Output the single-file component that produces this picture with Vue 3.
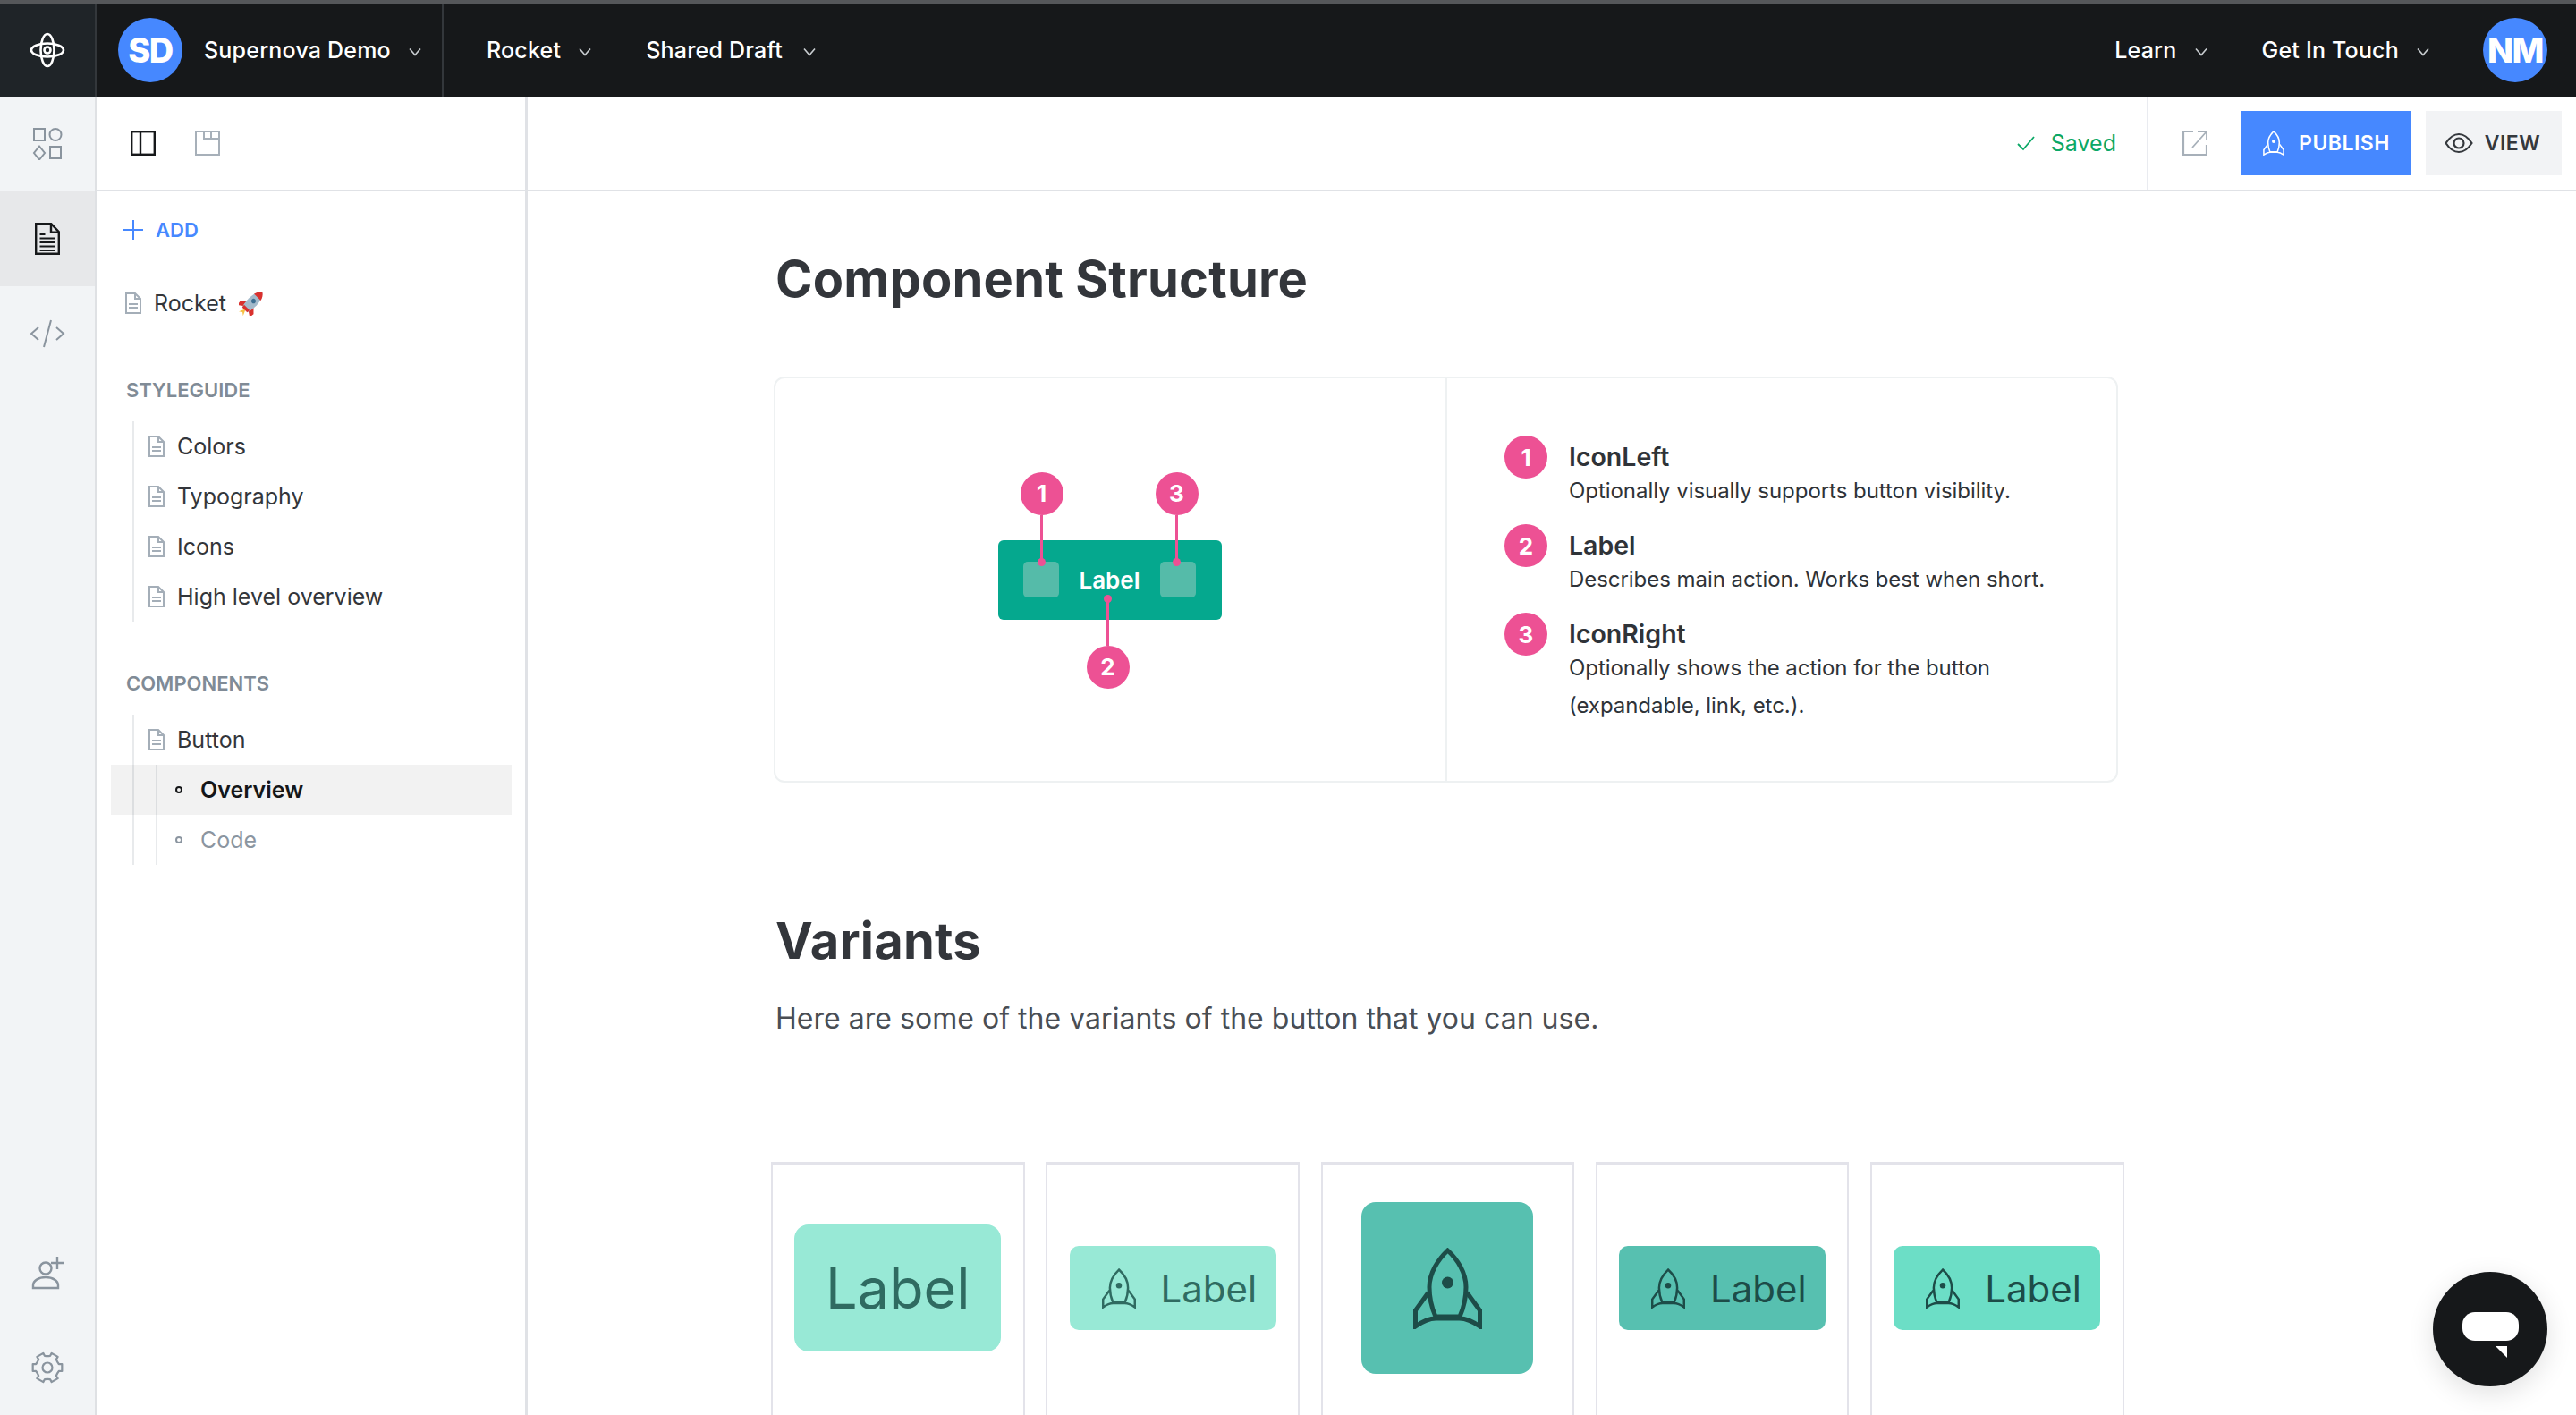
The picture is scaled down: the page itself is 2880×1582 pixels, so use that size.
<script setup>
const styleguide = ['Colors', 'Typography', 'Icons', 'High level overview']
const variants = [
  { id: 1, cls: 'v-text', icon: false, label: true },
  { id: 2, cls: 'v-light', icon: true, label: true },
  { id: 3, cls: 'v-icon', icon: true, label: false },
  { id: 4, cls: 'v-dark', icon: true, label: true },
  { id: 5, cls: 'v-mint', icon: true, label: true },
]
const legend = [
  { n: 1, title: 'IconLeft', lines: ['Optionally visually supports button visibility.'] },
  { n: 2, title: 'Label', lines: ['Describes main action. Works best when short.'] },
  { n: 3, title: 'IconRight', lines: ['Optionally shows the action for the button', '(expandable, link, etc.).'] },
]
function gearPath() {
  const pts = []
  const cx = 18, cy = 18, teeth = 6
  for (let i = 0; i < teeth; i++) {
    const a = (i * Math.PI * 2) / teeth
    const w = 0.24, v = 0.3
    const p = (r, t) => `${(cx + r * Math.cos(a + t)).toFixed(2)} ${(cy + r * Math.sin(a + t)).toFixed(2)}`
    pts.push(`${i ? 'L' : 'M'}${p(13.4, -v)}L${p(16.8, -w)}L${p(16.8, w)}L${p(13.4, v)}`)
    const mid = a + Math.PI / teeth
    pts.push(`Q${(cx + 12.6 * Math.cos(mid)).toFixed(2)} ${(cy + 12.6 * Math.sin(mid)).toFixed(2)} `)
    const nxt = a + (Math.PI * 2) / teeth - v
    pts.push(`${(cx + 13.4 * Math.cos(nxt)).toFixed(2)} ${(cy + 13.4 * Math.sin(nxt)).toFixed(2)}`)
  }
  return pts.join('') + 'Z'
}
const gear = gearPath()
</script>

<template>
  <div class="app">
    <svg class="defs" aria-hidden="true">
      <defs>
        <symbol id="rocket" viewBox="0 0 77 91">
          <path fill="none" stroke="currentColor" stroke-width="5" d="M38.500 3C28 13 18 28 18 44c0 12 3 24 7 33h27c4-9 7-21 7-33 0-16-9.500-31-20.500-41Z" />
          <path fill="none" stroke="currentColor" stroke-width="5" d="M17 50 2.500 70v18c7-5 15-9 23-9h26c8 0 16 4 23 9V70L60 50" />
          <circle cx="38.500" cy="39" r="6.500" fill="currentColor" />
        </symbol>
        <symbol id="doc" viewBox="0 0 18 24">
          <path fill="none" stroke="currentColor" stroke-width="2" d="M1 1h10l6 6v16H1Z" />
          <path fill="none" stroke="currentColor" stroke-width="2" d="M11 1v6h6M4 13h10M4 17h10" />
        </symbol>
        <symbol id="chev" viewBox="0 0 14 10">
          <path fill="none" stroke="currentColor" stroke-width="1.600" d="M1 1.500 7 8.500 13 1.500" />
        </symbol>
      </defs>
    </svg>

    <header class="topbar">
      <div class="logo-cell">
        <svg width="40" height="40" viewBox="0 0 40 40" fill="none" stroke="#fff" stroke-width="2.600">
          <ellipse cx="20" cy="20" rx="7.500" ry="18" />
          <ellipse cx="20" cy="20" rx="18" ry="7.500" />
          <circle cx="20" cy="20" r="3.500" />
        </svg>
      </div>
      <div class="brand">
        <span class="avatar">SD</span>
        <span class="top-text">Supernova Demo</span>
        <svg class="chev"><use href="#chev" /></svg>
      </div>
      <nav class="top-nav">
        <span class="top-text">Rocket</span>
        <svg class="chev"><use href="#chev" /></svg>
        <span class="top-text second">Shared Draft</span>
        <svg class="chev"><use href="#chev" /></svg>
      </nav>
      <div class="top-right">
        <span class="top-text">Learn</span>
        <svg class="chev"><use href="#chev" /></svg>
        <span class="top-text second">Get In Touch</span>
        <svg class="chev"><use href="#chev" /></svg>
        <span class="avatar last">NM</span>
      </div>
    </header>

    <div class="body">
      <aside class="rail">
        <div class="rail-item">
          <svg width="34" height="36" viewBox="0 0 34 36" fill="none" stroke="#8a949e" stroke-width="2">
            <rect x="2" y="1" width="12" height="13" />
            <ellipse cx="26" cy="7.500" rx="6.500" ry="6.500" />
            <path d="M8 20.500 14 28 8 35.500 2 28Z" />
            <rect x="20" y="21" width="12" height="13" />
          </svg>
        </div>
        <div class="rail-item active">
          <svg width="28" height="36" viewBox="0 0 28 36" fill="none" stroke="#16181a" stroke-width="2.400">
            <path d="M1.200 1.200h17l8.600 9v24.600H1.200Z" />
            <path d="M18 1.200v9.500h8.800" />
            <path d="M5.500 13h6M5.500 17.500h17M5.500 22h17M5.500 26.500h17M5.500 31h17" stroke-width="2" />
          </svg>
        </div>
        <div class="rail-item">
          <svg width="40" height="32" viewBox="0 0 40 32" fill="none" stroke="#8a949e" stroke-width="2">
            <path d="M10 9 2 16l8 7M30 9l8 7-8 7M24 1 16 31" />
          </svg>
        </div>
        <div class="rail-item push">
          <svg width="36" height="38" viewBox="0 0 36 38" fill="none" stroke="#8a949e" stroke-width="2.400">
            <circle cx="16" cy="14" r="6.500" />
            <path d="M2 36v-3c0-5 6-9 14-9s14 4 14 9v3Z" />
            <path d="M29 1v14M22 8h14" />
          </svg>
        </div>
        <div class="rail-item">
          <svg width="36" height="36" viewBox="0 0 36 36" fill="none" stroke="#8a949e" stroke-width="2.200" stroke-linejoin="round">
            <path :d="gear" />
            <circle cx="18" cy="18" r="5.500" />
          </svg>
        </div>
      </aside>

      <aside class="sidebar">
        <div class="sub-tools">
          <svg width="28" height="28" viewBox="0 0 28 28" fill="none" stroke="#16181a" stroke-width="2.400">
            <rect x="1.200" y="1.200" width="25.600" height="25.600" />
            <path d="M11 1v26" />
          </svg>
          <svg width="28" height="28" viewBox="0 0 28 28" fill="none" stroke="#a7b0b9" stroke-width="2">
            <rect x="1" y="1" width="26" height="26" />
            <path d="M10 1v8h17M18 1v8" />
          </svg>
        </div>
        <div class="side-body">
          <div class="add">
            <svg width="22" height="22" viewBox="0 0 22 22" fill="none" stroke="#4688ff" stroke-width="2"><path d="M11 0v22M0 11h22" /></svg>
            <span>ADD</span>
          </div>
          <div class="page root">
            <svg class="doc"><use href="#doc" /></svg>
            <span>Rocket</span>
            <svg class="emoji" width="28" height="28" viewBox="-16 -16 32 32">
              <g transform="rotate(45)">
                <path d="M0 10 -4 19 0 16 4 19Z" fill="#f5c043" />
                <path d="M-6 2-12 8-11 14-5 10ZM6 2 12 8 11 14 5 10Z" fill="#d9312e" />
                <path d="M0-20C7-14 8-2 5 11H-5C-8-2-7-14 0-20Z" fill="#a3bacb" />
                <path d="M0-20C3-18 5-15 6-11H-6C-5-15-3-18 0-20Z" fill="#d9312e" />
                <path d="M-5 8H5L4.500 12H-4.500Z" fill="#d9312e" />
                <circle cx="0" cy="-4" r="3" fill="#3d6f92" />
              </g>
            </svg>
          </div>

          <div class="section">STYLEGUIDE</div>
          <ul class="tree">
            <li v-for="item in styleguide" :key="item" class="page">
              <svg class="doc"><use href="#doc" /></svg>
              <span>{{ item }}</span>
            </li>
          </ul>

          <div class="section">COMPONENTS</div>
          <ul class="tree">
            <li class="page">
              <svg class="doc"><use href="#doc" /></svg>
              <span>Button</span>
            </li>
            <li>
              <ul class="subtree">
                <li class="sub current"><i class="bullet"></i><span>Overview</span></li>
                <li class="sub muted"><i class="bullet"></i><span>Code</span></li>
              </ul>
            </li>
          </ul>
        </div>
      </aside>

      <main class="main">
        <div class="toolbar">
          <div class="saved">
            <svg width="20" height="18" viewBox="0 0 20 18" fill="none" stroke="#0ba866" stroke-width="1.800"><path d="M1 10l6 6L19 2" /></svg>
            <span>Saved</span>
          </div>
          <div class="tool-actions">
            <svg class="open" width="28" height="28" viewBox="0 0 28 28" fill="none" stroke="#a7b0b9" stroke-width="2.200">
              <path d="M12 1H1v26h26V16" />
              <path d="M27 1 11 19M17 1h10v10" stroke-width="1.800" />
            </svg>
            <button class="btn publish">
              <svg width="24" height="28"><use href="#rocket" /></svg>
              PUBLISH
            </button>
            <button class="btn view">
              <svg width="34" height="24" viewBox="0 0 32 24" fill="none" stroke="#35383d" stroke-width="2.200">
                <path d="M1.500 12C6 5 11 2 16 2s10 3 14.500 10C26 19 21 22 16 22S6 19 1.500 12Z" />
                <circle cx="16" cy="12" r="5.500" />
              </svg>
              VIEW
            </button>
          </div>
        </div>

        <div class="content">
          <h1 class="first">Component Structure</h1>

          <section class="card">
            <div class="diagram">
              <div class="demo-btn">
                <span class="slot"></span>
                <span class="demo-label">Label</span>
                <span class="slot"></span>
                <div class="pin p1"><b>1</b><i></i></div>
                <div class="pin p3"><b>3</b><i></i></div>
                <div class="pin p2 down"><b>2</b><i></i></div>
              </div>
            </div>
            <div class="legend">
              <div v-for="row in legend" :key="row.n" class="legend-row">
                <span class="num">{{ row.n }}</span>
                <div class="legend-text">
                  <div class="legend-title">{{ row.title }}</div>
                  <div v-for="line in row.lines" :key="line" class="legend-desc">{{ line }}</div>
                </div>
              </div>
            </div>
          </section>

          <h1 class="second-h">Variants</h1>
          <p class="lead">Here are some of the variants of the button that you can use.</p>

          <div class="variants">
            <div v-for="v in variants" :key="v.id" class="variant">
              <div class="vbtn" :class="v.cls">
                <svg v-if="v.icon" class="vicon"><use href="#rocket" /></svg>
                <span v-if="v.label">Label</span>
              </div>
            </div>
          </div>
        </div>
      </main>
    </div>

    <div class="chat">
      <span class="pill"></span>
      <svg class="tail" width="13" height="13" viewBox="0 0 13 13"><path d="M0 0h13v13Z" fill="#fff" /></svg>
    </div>
  </div>
</template>

<style>
html, body { margin: 0; background: #fff; }
</style>

<style scoped>
* { box-sizing: border-box; }
.app {
  position: relative;
  width: 2880px;
  height: 1582px;
  overflow: hidden;
  display: flex;
  flex-direction: column;
  font-family: Inter, "Liberation Sans", sans-serif;
  color: #33363b;
}
.defs { position: absolute; width: 0; height: 0; }
ul { list-style: none; margin: 0; padding: 0; }

/* top bar */
.topbar {
  flex: none;
  height: 108px;
  display: flex;
  background: #16181a;
  border-top: 4px solid #55575a;
  color: #fff;
}
.logo-cell {
  width: 108px;
  display: flex;
  align-items: center;
  justify-content: center;
  background: #1f2428;
  border-right: 2px solid #33373b;
}
.brand {
  width: 388px;
  display: flex;
  align-items: center;
  padding-left: 24px;
  border-right: 2px solid #33373b;
}
.avatar {
  flex: none;
  width: 72px;
  height: 72px;
  border-radius: 50%;
  background: #4688ff;
  display: flex;
  align-items: center;
  justify-content: center;
  color: #fff;
  font-size: 38px;
  font-weight: 800;
  letter-spacing: -1.500px;
  margin-right: 24px;
}
.avatar.last { margin: 0 0 0 60px; }
.top-text {
  font-size: 25px;
  font-weight: 500;
  letter-spacing: .2px;
  white-space: nowrap;
}
.chev { width: 14px; height: 10px; margin-left: 20px; margin-top: 4px; color: #c9cdd1; flex: none; }
.top-nav { display: flex; align-items: center; padding-left: 48px; }
.top-nav .second { margin-left: 61px; }
.top-nav .chev:last-child { margin-left: 23px; }
.top-right { margin-left: auto; display: flex; align-items: center; padding-right: 32px; }
.top-right .second { margin-left: 61px; }

/* body */
.body { flex: 1; display: flex; min-height: 0; }
.rail {
  flex: none;
  width: 108px;
  display: flex;
  flex-direction: column;
  background: #f2f4f6;
  border-right: 2px solid #dfe1e4;
}
.rail-item { height: 106px; flex: none; display: flex; align-items: center; justify-content: center; }
.rail-item.active { background: #e7e8ea; }
.rail-item.push { margin-top: auto; }

/* sidebar */
.sidebar {
  flex: none;
  width: 482px;
  border-right: 3px solid #e0e2e6;
  display: flex;
  flex-direction: column;
}
.sub-tools {
  height: 106px;
  flex: none;
  border-bottom: 2px solid #e0e2e6;
  display: flex;
  align-items: center;
  gap: 44px;
  padding-left: 38px;
}
.side-body { padding-top: 25px; }
.add {
  height: 36px;
  display: flex;
  align-items: center;
  padding-left: 30px;
  gap: 14px;
  color: #4688ff;
  font-size: 22px;
  font-weight: 600;
}
.page {
  height: 56px;
  display: flex;
  align-items: center;
  font-size: 25px;
  color: #33363b;
  white-space: nowrap;
}
.page.root { margin-top: 36px; padding-left: 32px; }
.doc { width: 18px; height: 24px; color: #a4aeb8; margin-right: 14px; flex: none; }
.emoji { margin-left: 14px; }
.section {
  height: 36px;
  margin: 51px 0 17px 33px;
  line-height: 36px;
  font-size: 22px;
  font-weight: 600;
  color: #808b96;
}
.tree { margin-left: 40px; border-left: 2px solid #e8eaec; }
.tree > .page { padding-left: 16px; }
.subtree { margin-left: 24px; border-left: 2px solid #e8eaec; }
.sub {
  position: relative;
  height: 56px;
  display: flex;
  align-items: center;
  padding-left: 20px;
  font-size: 25px;
  white-space: nowrap;
}
.sub.current { color: #16181a; font-weight: 600; }
.sub.current::before {
  content: "";
  position: absolute;
  left: -52px;
  width: 448px;
  top: 0;
  bottom: 0;
  background: rgba(0, 0, 0, .05);
}
.sub.muted { color: #8b95a0; }
.bullet {
  width: 8px;
  height: 8px;
  border: 2px solid currentColor;
  border-radius: 50%;
  margin-right: 20px;
  flex: none;
}

/* main */
.main { flex: 1; min-width: 0; display: flex; flex-direction: column; }
.toolbar {
  flex: none;
  height: 106px;
  border-bottom: 2px solid #e0e2e6;
  display: flex;
  justify-content: flex-end;
  align-items: stretch;
}
.saved {
  display: flex;
  align-items: center;
  gap: 18px;
  color: #0ba866;
  font-size: 25px;
  padding-right: 34px;
  border-right: 2px solid #e9ebf0;
}
.tool-actions { display: flex; align-items: center; padding: 0 16px 0 38px; gap: 16px; }
.open { margin-right: 22px; }
.btn {
  height: 72px;
  border: 0;
  font-family: inherit;
  font-size: 23px;
  font-weight: 600;
  letter-spacing: .5px;
  display: flex;
  align-items: center;
  justify-content: center;
}
.publish { width: 190px; background: #4688ff; color: #fff; gap: 16px; }
.view { width: 152px; padding: 0 4px 0 0; background: #f2f3f5; color: #35383d; gap: 12px; }

.content { padding-left: 272px; }
h1 {
  margin: 0 0 0 5px;
  font-size: 56px;
  font-weight: 700;
  line-height: 68px;
  letter-spacing: .2px;
  color: #33363b;
}
.first { margin-top: 64px; }
.second-h { margin-top: 143px; }
.lead {
  margin: 29px 0 0 5px;
  font-size: 32px;
  line-height: 48px;
  letter-spacing: .03px;
  color: #4a4e54;
}

.card {
  margin: 75px 0 0 3px;
  width: 1503px;
  height: 454px;
  display: flex;
  border: 2px solid #eef1f2;
  border-radius: 12px;
}
.diagram {
  width: 751px;
  flex: none;
  border-right: 2px solid #eef1f2;
  padding-right: 2px;
  display: flex;
  align-items: center;
  justify-content: center;
}
.demo-btn {
  position: relative;
  width: 250px;
  height: 89px;
  background: #05a88e;
  border-radius: 6px;
  display: flex;
  align-items: center;
  justify-content: space-between;
  padding: 0 28px;
}
.slot { width: 40px; height: 40px; background: #55bba9; border-radius: 5px; }
.demo-label { color: #fff; font-size: 26px; font-weight: 600; }
.pin {
  position: absolute;
  top: -76px;
  width: 48px;
  display: flex;
  flex-direction: column;
  align-items: center;
}
.pin b, .num {
  flex: none;
  width: 48px;
  height: 48px;
  border-radius: 50%;
  background: #ed5194;
  color: #fff;
  font-size: 26px;
  font-weight: 700;
  display: flex;
  align-items: center;
  justify-content: center;
}
.pin i { position: relative; width: 3px; height: 53px; background: #ed5194; display: block; }
.pin i::after {
  content: "";
  position: absolute;
  left: -3px;
  bottom: -4px;
  width: 9px;
  height: 9px;
  border-radius: 50%;
  background: #ed5194;
}
.pin.down { flex-direction: column-reverse; top: 65px; }
.pin.down i::after { bottom: auto; top: -4px; }
.p1 { left: 25px; }
.p3 { left: 176px; }
.p2 { left: 99px; }

.legend { flex: 1; padding: 64px 0 0 64px; }
.legend-row { display: flex; gap: 24px; margin-bottom: 16px; }
.legend-text { padding-top: 6px; }
.legend-title { font-size: 28.500px; font-weight: 600; line-height: 35px; color: #2f3338; }
.legend-desc { font-size: 24px; line-height: 42px; letter-spacing: -.05px; color: #2f3338; white-space: nowrap; }

.variants { display: flex; gap: 23.750px; margin-top: 136px; }
.variant {
  flex: none;
  width: 283.500px;
  height: 300px;
  border: 2px solid #e3e3ea;
  border-top-width: 3px;
  padding-top: 91px;
  display: flex;
  justify-content: center;
  align-items: flex-start;
}
.vbtn {
  width: 231px;
  height: 94px;
  border-radius: 10px;
  display: flex;
  align-items: center;
  padding-left: 36px;
  gap: 28px;
  font-size: 42px;
  color: #1d4c48;
}
.vicon { width: 38px; height: 45px; flex: none; }
.v-text {
  height: 142px;
  margin-top: -24px;
  padding-left: 0;
  justify-content: center;
  border-radius: 16px;
  font-size: 63px;
  background: #98e9d6;
  color: #2f6b61;
}
.v-light { background: #98e9d6; color: #2f6b61; }
.v-icon {
  width: 192px;
  height: 192px;
  margin-top: -49px;
  padding-left: 0;
  justify-content: center;
  border-radius: 16px;
  background: #57c0b0;
}
.v-icon .vicon { width: 77px; height: 91px; }
.v-dark { background: #57c0b0; }
.v-mint { background: #6cdec6; }

.chat {
  position: absolute;
  left: 2720px;
  top: 1422px;
  width: 128px;
  height: 128px;
  border-radius: 50%;
  background: #16181a;
  box-shadow: 0 8px 30px rgba(0, 0, 0, .12);
}
.pill {
  position: absolute;
  left: 33px;
  top: 45px;
  width: 63px;
  height: 32px;
  border-radius: 14px;
  background: #fff;
}
.tail { position: absolute; left: 70px; top: 83px; }
.publish svg { color: #fff; }
</style>
